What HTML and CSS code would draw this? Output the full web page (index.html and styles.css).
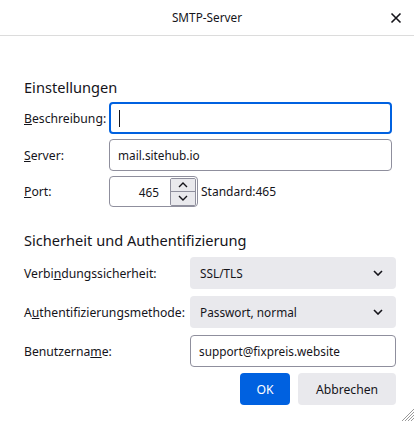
FILE: index.html
```html
<!DOCTYPE html>
<html lang="de">
<head>
<meta charset="utf-8">
<title>SMTP-Server</title>
<link rel="stylesheet" href="styles.css">
</head>
<body>
<div class="dialog">
  <header class="titlebar">
    <span class="title">SMTP-Server</span>
    <button class="close" aria-label="Schließen">
      <svg width="12" height="12" viewBox="0 0 12 12"><path d="M1.5 1.5L10.5 10.5M10.5 1.5L1.5 10.5" stroke="#15141a" stroke-width="1.6" fill="none"/></svg>
    </button>
  </header>
  <main class="content">
    <h2 class="heading first">Einstellungen</h2>
    <div class="grid top">
      <label class="label"><u>B</u>eschreibung:</label>
      <div class="input focused"><span class="caret"></span></div>
      <label class="label"><u>S</u>erver:</label>
      <div class="input">mail.sitehub.io</div>
      <label class="label"><u>P</u>ort:</label>
      <div class="port-row">
        <div class="input port">
          <span class="port-value">465</span>
          <span class="spinner">
            <span class="spin up"><svg width="10" height="6" viewBox="0 0 10 6"><path d="M1 5L5 1L9 5" stroke="#15141a" stroke-width="1.4" fill="none"/></svg></span>
            <span class="spin down"><svg width="10" height="6" viewBox="0 0 10 6"><path d="M1 1L5 5L9 1" stroke="#15141a" stroke-width="1.4" fill="none"/></svg></span>
          </span>
        </div>
        <span class="std">Standard:465</span>
      </div>
    </div>
    <h2 class="heading second">Sicherheit und Authentifizierung</h2>
    <div class="grid bottom">
      <label class="label">Verbi<u>n</u>dungssicherheit:</label>
      <div class="select">SSL/TLS<svg class="chev" width="10" height="6" viewBox="0 0 10 6"><path d="M1 1L5 5L9 1" stroke="#15141a" stroke-width="1.6" fill="none"/></svg></div>
      <label class="label">A<u>u</u>thentifizierungsmethode:</label>
      <div class="select">Passwort, normal<svg class="chev" width="10" height="6" viewBox="0 0 10 6"><path d="M1 1L5 5L9 1" stroke="#15141a" stroke-width="1.6" fill="none"/></svg></div>
      <label class="label">Benutzerna<u>m</u>e:</label>
      <div class="input user">support@fixpreis.website</div>
    </div>
    <div class="buttons">
      <button class="btn primary">OK</button>
      <button class="btn">Abbrechen</button>
    </div>
  </main>
  <svg class="grip" width="14" height="14" viewBox="0 0 14 14"><path d="M14 2L2 14M14 5L5 14M14 8L8 14M14 11L11 14" stroke="#9a9a9a" stroke-width="1" fill="none"/></svg>
</div>
</body>
</html>
```
FILE: styles.css
```css
* { box-sizing: border-box; }
html, body { margin: 0; padding: 0; background: #fff; }
body {
  font-family: "Noto Sans", "Open Sans", sans-serif;
  font-size: 12.2px;
  color: #15141a;
  width: 414px;
  height: 421px;
  overflow: hidden;
}
.dialog { position: relative; width: 414px; height: 421px; }
.titlebar {
  height: 36px;
  border-bottom: 1px solid #dcdcdc;
  display: flex;
  align-items: center;
  justify-content: center;
  position: relative;
}
.title { font-size: 11.8px; padding-bottom: 1px; }
.close {
  position: absolute;
  right: 12px;
  top: 12px;
  border: 0;
  background: none;
  padding: 0;
  width: 12px;
  height: 12px;
  display: flex;
}
.content { padding: 0 18px 0 24px; }
.heading {
  font-size: 14.6px;
  font-weight: normal;
  margin: 0;
  line-height: 20px;
}
.heading.first { margin-top: 41px; margin-bottom: 5px; }
.heading.second { margin-top: 23px; margin-bottom: 7px; }
.grid { display: grid; align-items: center; }
.grid.top { grid-template-columns: 85px 283px; row-gap: 5px; }
.grid.bottom {
  grid-template-columns: 166px 206px;
  grid-template-rows: 32px 32px 32px;
  row-gap: 7px;
}
.label { white-space: nowrap; }
.label u { text-underline-offset: 1px; }
.input {
  height: 32px;
  border: 1px solid #8f8f9d;
  border-radius: 4px;
  display: flex;
  align-items: center;
  padding: 0 8px;
  font-size: 11.8px;
  background: #fff;
}
.input.focused { border: 2px solid #0061e0; padding-left: 8px; }
.caret { width: 1px; height: 17px; background: #15141a; }
.port-row { display: flex; align-items: center; gap: 3px; }
.input.port {
  width: 89px;
  height: 31px;
  padding: 0 1px 0 0;
  justify-content: flex-end;
  gap: 11px;
}
.port-value { font-size: 11.8px; }
.spinner {
  display: flex;
  flex-direction: column;
  width: 26px;
  height: 28px;
  border: 1px solid #8f8f9d;
  border-radius: 2px;
  overflow: hidden;
}
.spin {
  flex: 1;
  background: #e9e9ed;
  display: flex;
  align-items: center;
  justify-content: center;
}
.spin.up { border-bottom: 1px solid #8f8f9d; }
.std { font-size: 12px; }
.select {
  height: 32px;
  background: #e9e9ed;
  border-radius: 4px;
  display: flex;
  align-items: center;
  justify-content: space-between;
  padding: 0 13px 0 10px;
  font-size: 11.8px;
}
.input.user { padding-left: 8px; height: 32px; }
.buttons {
  display: flex;
  justify-content: flex-end;
  gap: 8px;
  margin-top: 6px;
}
.btn {
  height: 32px;
  border: 0;
  border-radius: 4px;
  background: #e9e9ed;
  color: #15141a;
  font-family: inherit;
  font-size: 12.2px;
  padding: 0;
  width: 98px;
}
.btn.primary { background: #0061e0; color: #fff; width: 50px; }
.grip { position: absolute; right: 0; bottom: 0; }
```
